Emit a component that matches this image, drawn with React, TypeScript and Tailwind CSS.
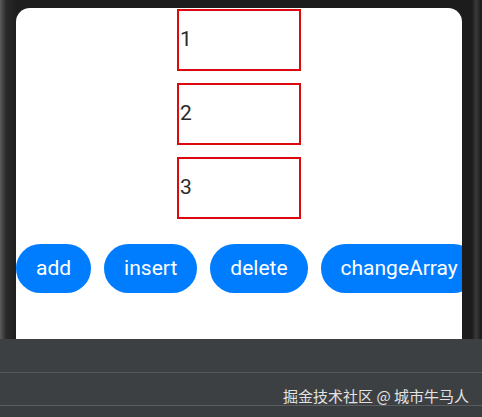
const items = ["1", "2", "3"];
const buttons = ["add", "insert", "delete", "changeArray"];

export default function App() {
  return (
    <div className="w-[482px] h-[417px] overflow-hidden flex flex-col bg-[#3d4043] font-['Roboto','Noto_Sans_CJK_SC',sans-serif]">
      {/* device frame + screen */}
      <div className="h-[339px] shrink-0 flex pt-[8px] pl-[16px] pr-[20px] bg-[linear-gradient(to_right,#5c5c5c_0px,#2a2a2a_6px,#1e1e1e_16px,#1c1c1c_472px,#3a3a3a_476px,#1c1c1c_481px)]">
        <div className="flex-1 bg-white rounded-t-[14px] overflow-hidden flex flex-col">
          <div className="flex flex-col gap-[12px] pl-[161px] pt-px">
            {items.map((n) => (
              <div
                key={n}
                className="w-[124px] h-[62px] border-2 border-[#dc0a0f] flex items-center pl-px text-[21px] text-[#2b2b2b]"
              >
                {n}
              </div>
            ))}
          </div>
          <div className="flex gap-[13px] mt-[25px] whitespace-nowrap">
            {buttons.map((b) => (
              <button
                key={b}
                className="h-[49px] px-[20px] shrink-0 rounded-full bg-[#007dff] text-white text-[21px] leading-none"
              >
                {b}
              </button>
            ))}
          </div>
        </div>
      </div>
      {/* bottom panel */}
      <div className="h-[34px] shrink-0 border-b border-[#55585b]" />
      <div className="h-[33px] shrink-0 flex justify-end items-end pr-[13px] border-b border-[#5a5d60]">
        <span className="text-[15px] leading-[18px] text-[#e2e2e2] font-['Noto_Sans_CJK_SC',sans-serif]">
          掘金技术社区 @ 城市牛马人
        </span>
      </div>
      <div className="flex-1 bg-[#3a3d40]" />
    </div>
  );
}
